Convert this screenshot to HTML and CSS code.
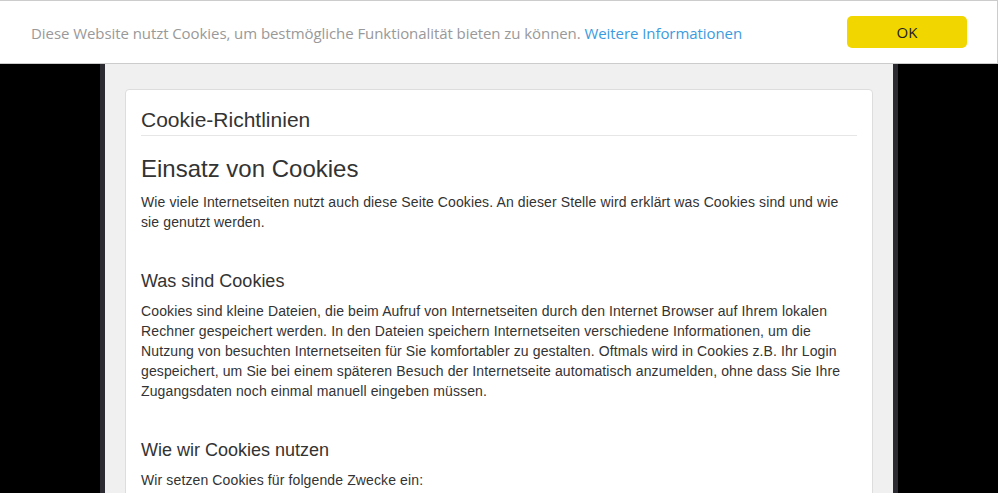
FILE: index.html
```html
<!DOCTYPE html>
<html lang="de">
<head>
    <meta charset="UTF-8">
    <meta name="viewport" content="width=device-width, initial-scale=1.0">
    <title>Cookie-Richtlinien</title>
    <link rel="stylesheet" href="styles.css">
</head>
<body>
    <div class="cookie-bar">
        <p class="cookie-text">
            Diese Website nutzt Cookies, um bestmögliche Funktionalität bieten zu können.
            <a href="#" class="cookie-link">Weitere Informationen</a>
        </p>
        <button class="cookie-ok">OK</button>
    </div>

    <div class="page">
        <div class="panel">
            <h2 class="panel-title">Cookie-Richtlinien</h2>

            <h1>Einsatz von Cookies</h1>
            <p>Wie viele Internetseiten nutzt auch diese Seite Cookies. An dieser Stelle wird erklärt was Cookies sind und wie sie genutzt werden.</p>

            <h3>Was sind Cookies</h3>
            <p>Cookies sind kleine Dateien, die beim Aufruf von Internetseiten durch den Internet Browser auf Ihrem lokalen Rechner gespeichert werden. In den Dateien speichern Internetseiten verschiedene Informationen, um die Nutzung von besuchten Internetseiten für Sie komfortabler zu gestalten. Oftmals wird in Cookies z.B. Ihr Login gespeichert, um Sie bei einem späteren Besuch der Internetseite automatisch anzumelden, ohne dass Sie Ihre Zugangsdaten noch einmal manuell eingeben müssen.</p>

            <h3>Wie wir Cookies nutzen</h3>
            <p>Wir setzen Cookies für folgende Zwecke ein:</p>
            <ul>
                <li>Speichern Ihrer Login-Daten</li>
                <li>Speichern Ihrer Einstellungen</li>
            </ul>
        </div>
    </div>
</body>
</html>
```

FILE: styles.css
```css
body {
    margin: 0;
    background: #000;
    font-family: "Liberation Sans", Arial, sans-serif;
    font-size: 14px;
    line-height: 20px;
    color: #333;
}

/* cookie banner lies over the page top */
.cookie-bar {
    position: fixed;
    top: 0;
    left: 0;
    right: 0;
    z-index: 10;
    height: 64px;
    box-sizing: border-box;
    background: #fff;
    border-top: 1px solid #ccc;
    border-right: 1px solid #ccc;
    border-bottom: 1px solid #ccc;
    display: flex;
    align-items: center;
    justify-content: space-between;
    padding: 0 30px 0 31px;
}
.cookie-text {
    margin: 2px 0 0;
    font-family: "Open Sans", sans-serif;
    font-size: 15px;
    letter-spacing: -0.07px;
    color: #999;
}
.cookie-link {
    color: #3b9be0;
    text-decoration: none;
}
.cookie-ok {
    width: 120px;
    height: 32px;
    background: #f1d600;
    border: none;
    border-radius: 5px;
    font-family: "Open Sans", sans-serif;
    font-size: 15px;
    color: #222;
    cursor: pointer;
}

.page {
    width: 798px;
    min-height: 493px;
    box-sizing: border-box;
    margin-left: 100px;
    padding: 89px 20px 0;
    background: #f0f0f0;
    border-left: 5px solid #2b2b31;
    border-right: 5px solid #2b2b31;
}
.panel {
    background: #fff;
    border: 1px solid #ddd;
    border-radius: 4px;
    padding: 18px 15px 15px;
}
.panel-title {
    margin: 0 0 20px;
    padding-bottom: 3px;
    border-bottom: 1px solid #e6e6e6;
    font-size: 21px;
    font-weight: normal;
    line-height: 24px;
}
h1 {
    margin: 0 0 10px;
    font-size: 24px;
    font-weight: normal;
    line-height: 26px;
}
h3 {
    margin: 39px 0 10px;
    font-size: 18px;
    font-weight: normal;
    line-height: 20px;
}
p {
    margin: 0 0 10px;
    letter-spacing: 0.12px;
}
```
